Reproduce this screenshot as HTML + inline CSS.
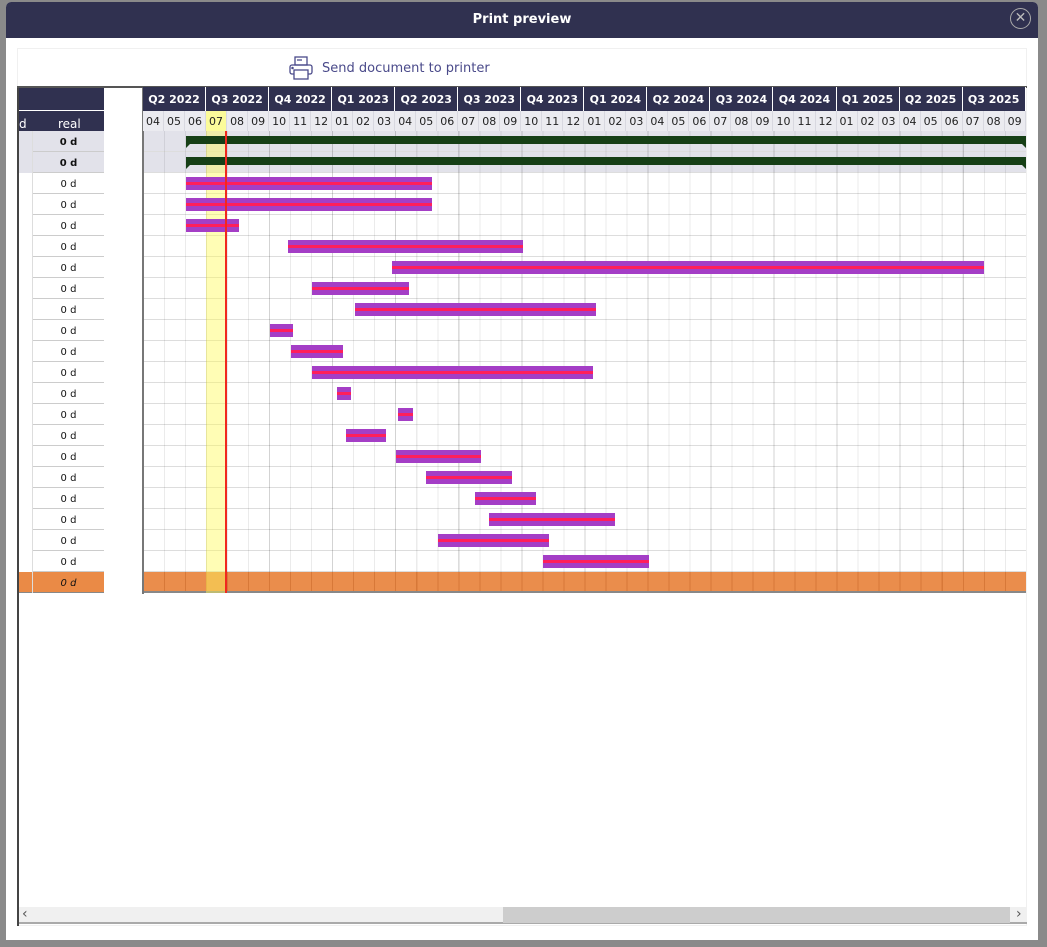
<!DOCTYPE html>
<html><head><meta charset="utf-8"><style>
*{margin:0;padding:0;box-sizing:border-box}
body{width:1047px;height:947px;background:#8a8a8a;position:relative;overflow:hidden;font-family:"DejaVu Sans","Liberation Sans",sans-serif}
.a{position:absolute}
.modal{left:6px;top:2px;width:1032px;height:938px;background:#fff;border-radius:5px 5px 0 0;overflow:hidden}
.hdr{left:0;top:0;width:1032px;height:36px;background:#303150;color:#fff;font-weight:bold;font-size:13px;text-align:center;line-height:36px}
.q{display:flex;left:143px;top:87px;height:24px;background:#303150;color:#fff;font-size:11px;font-weight:bold}
.q span{width:63.06px;text-align:center;line-height:25px;border-right:1px solid #fff}
.m{display:flex;left:143px;top:111px;height:20px;background:#ebebf0;color:#222;font-size:11px}
.m span{width:21.02px;text-align:center;line-height:22px;border-right:1px solid #d8d8e0}
.bar{position:absolute;height:13px;background:#a43ec6}
.bar:after{content:"";position:absolute;left:0;right:0;top:5px;height:3px;background:#ff1f5a}
.lc{position:absolute;left:33px;width:71px;height:21px;border-bottom:1px solid #ccc;font-size:10px;text-align:center;line-height:24px;color:#111}
</style></head><body>
<div class="a modal">
<div class="a hdr">Print preview</div>
<div class="a" style="right:7px;top:6px;width:21px;height:21px;border:1.5px solid #aaa;border-radius:50%;color:#bbb;font-size:14px;line-height:18px;text-align:center">✕</div>
</div>
<div class="a" style="left:17px;top:48px;width:1010px;height:878px;border:1px solid #f0f0f0;background:#fff"></div>
<svg class="a" style="left:289px;top:56px" width="25" height="24" viewBox="0 0 25 24" fill="none" stroke="#4a4a8a" stroke-width="1.3"><rect x="6" y="1" width="12" height="8"/><line x1="8" y1="4" x2="13" y2="4"/><rect x="1" y="9" width="22" height="9" rx="2"/><rect x="5" y="14" width="14" height="9" fill="#fff"/><circle cx="3.5" cy="12" r=".6" fill="#4a4a8a"/></svg>
<div class="a" style="left:322px;top:61px;font-size:13px;color:#4a4a8a">Send document to printer</div>
<div class="a" style="left:17px;top:86px;width:2px;height:840px;background:#444"></div>
<div class="a" style="left:17px;top:86px;width:1010px;height:2px;background:#555"></div>
<div class="a" style="left:19px;top:88px;width:85px;height:43px;background:#303150"></div>
<div class="a" style="left:19px;top:110px;width:85px;height:1px;background:#fff"></div>
<div class="a" style="left:19px;top:117px;color:#fff;font-size:12px">d</div>
<div class="a" style="left:58px;top:117px;color:#fff;font-size:12px">real</div>
<div class="a" style="left:19px;top:131px;width:85px;height:42px;background:#e2e2ea"></div>
<div class="a" style="left:32px;top:131px;width:1px;height:441px;background:#ddd"></div>
<div class="lc" style="top:131px;font-weight:bold">0 d</div>
<div class="lc" style="top:152px;font-weight:bold">0 d</div>
<div class="lc" style="top:173px">0 d</div><div class="lc" style="top:194px">0 d</div><div class="lc" style="top:215px">0 d</div><div class="lc" style="top:236px">0 d</div><div class="lc" style="top:257px">0 d</div><div class="lc" style="top:278px">0 d</div><div class="lc" style="top:299px">0 d</div><div class="lc" style="top:320px">0 d</div><div class="lc" style="top:341px">0 d</div><div class="lc" style="top:362px">0 d</div><div class="lc" style="top:383px">0 d</div><div class="lc" style="top:404px">0 d</div><div class="lc" style="top:425px">0 d</div><div class="lc" style="top:446px">0 d</div><div class="lc" style="top:467px">0 d</div><div class="lc" style="top:488px">0 d</div><div class="lc" style="top:509px">0 d</div><div class="lc" style="top:530px">0 d</div><div class="lc" style="top:551px">0 d</div>
<div class="a" style="left:19px;top:572px;width:85px;height:21px;background:#ea8a46;border-bottom:1px solid #888"></div>
<div class="a" style="left:32px;top:572px;width:1px;height:21px;background:#ddd"></div>
<div class="lc" style="top:572px;font-style:italic;border:none">0 d</div>
<div class="a" style="left:142px;top:88px;width:2px;height:506px;background:#777"></div>
<div class="a" style="left:144px;top:131px;width:882px;height:42px;background:#e2e2ea"></div>
<div class="a" style="left:144px;top:131px;width:882px;height:462px;background:repeating-linear-gradient(to right,transparent 0 20px,rgba(0,0,0,.08) 20px 21.02px),repeating-linear-gradient(to bottom,transparent 0 20px,#ddd 20px 21px)"></div>
<div class="a" style="left:144px;top:131px;width:882px;height:462px;background:repeating-linear-gradient(to right,transparent 0 62px,rgba(0,0,0,.1) 62px 63.06px)"></div>
<div class="a" style="left:144px;top:572px;width:882px;height:21px;background:#ea8d4c;border-bottom:2px solid #888;background-image:repeating-linear-gradient(to right,transparent 0 20px,rgba(180,80,20,.35) 20px 21.02px)"></div>
<div class="a" style="left:206px;top:131px;width:21px;height:462px;background:rgba(255,250,90,.45)"></div>
<div class="a q"><span>Q2 2022</span><span>Q3 2022</span><span>Q4 2022</span><span>Q1 2023</span><span>Q2 2023</span><span>Q3 2023</span><span>Q4 2023</span><span>Q1 2024</span><span>Q2 2024</span><span>Q3 2024</span><span>Q4 2024</span><span>Q1 2025</span><span>Q2 2025</span><span>Q3 2025</span></div>
<div class="a m"><span>04</span><span>05</span><span>06</span><span style="background:#fbfb9a">07</span><span>08</span><span>09</span><span>10</span><span>11</span><span>12</span><span>01</span><span>02</span><span>03</span><span>04</span><span>05</span><span>06</span><span>07</span><span>08</span><span>09</span><span>10</span><span>11</span><span>12</span><span>01</span><span>02</span><span>03</span><span>04</span><span>05</span><span>06</span><span>07</span><span>08</span><span>09</span><span>10</span><span>11</span><span>12</span><span>01</span><span>02</span><span>03</span><span>04</span><span>05</span><span>06</span><span>07</span><span>08</span><span>09</span></div>
<div class="a" style="left:186px;top:136px;width:840px;height:8px;background:#163f16"></div>
<div class="a" style="left:186px;top:144px;border-top:4px solid #163f16;border-right:4px solid transparent"></div>
<div class="a" style="left:1022px;top:144px;border-top:4px solid #163f16;border-left:4px solid transparent"></div>
<div class="a" style="left:186px;top:157px;width:840px;height:8px;background:#163f16"></div>
<div class="a" style="left:186px;top:165px;border-top:4px solid #163f16;border-right:4px solid transparent"></div>
<div class="a" style="left:1022px;top:165px;border-top:4px solid #163f16;border-left:4px solid transparent"></div>
<div class="bar" style="left:186px;top:177px;width:246px"></div>
<div class="bar" style="left:186px;top:198px;width:246px"></div>
<div class="bar" style="left:186px;top:219px;width:53px"></div>
<div class="bar" style="left:288px;top:240px;width:235px"></div>
<div class="bar" style="left:392px;top:261px;width:592px"></div>
<div class="bar" style="left:312px;top:282px;width:97px"></div>
<div class="bar" style="left:355px;top:303px;width:241px"></div>
<div class="bar" style="left:270px;top:324px;width:23px"></div>
<div class="bar" style="left:291px;top:345px;width:52px"></div>
<div class="bar" style="left:312px;top:366px;width:281px"></div>
<div class="bar" style="left:337px;top:387px;width:14px"></div>
<div class="bar" style="left:398px;top:408px;width:15px"></div>
<div class="bar" style="left:346px;top:429px;width:40px"></div>
<div class="bar" style="left:396px;top:450px;width:85px"></div>
<div class="bar" style="left:426px;top:471px;width:86px"></div>
<div class="bar" style="left:475px;top:492px;width:61px"></div>
<div class="bar" style="left:489px;top:513px;width:126px"></div>
<div class="bar" style="left:438px;top:534px;width:111px"></div>
<div class="bar" style="left:543px;top:555px;width:106px"></div>
<div class="a" style="left:225px;top:131px;width:2px;height:462px;background:#f0281e"></div>
<div class="a" style="left:19px;top:907px;width:1008px;height:17px;background:#f0f0f0;border-bottom:2px solid #aaa"></div>
<div class="a" style="left:503px;top:907px;width:507px;height:16px;background:#cdcdcd"></div>
<div class="a" style="left:22px;top:906px;font-size:14px;color:#555">‹</div>
<div class="a" style="left:1016px;top:906px;font-size:14px;color:#555">›</div>
</body></html>
